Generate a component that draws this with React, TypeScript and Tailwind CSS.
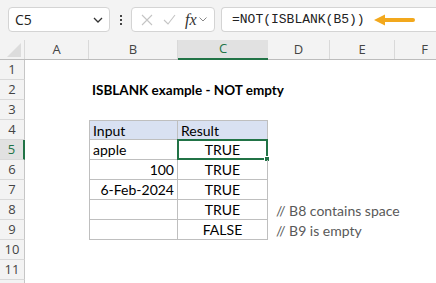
import React from "react";

const cols = [
  { key: "A", w: 64 },
  { key: "B", w: 89 },
  { key: "C", w: 90 },
  { key: "D", w: 62 },
  { key: "E", w: 65 },
  { key: "F", w: 60 },
];

function Row({ n, children, selected }: { n?: number; children?: React.ReactNode; selected?: boolean }) {
  return (
    <div className="flex h-[20px]">
      <div
        className={
          "w-[25px] shrink-0 flex items-center justify-center text-[13px] border-b border-[#d9d9d9] " +
          (selected
            ? "bg-[#e1e1e1] text-[#217346] border-r-2 border-r-[#217346]"
            : "bg-[#f3f3f3] text-[#444] border-r border-r-[#c6c6c6]")
        }
        style={{ fontFamily: "'Open Sans', sans-serif" }}
      >
        {n}
      </div>
      <div className="flex flex-1 min-w-0">{children}</div>
    </div>
  );
}

export default function App() {
  const cellFont = { fontFamily: "Lato, 'Liberation Sans', sans-serif" };
  return (
    <div className="w-[436px] h-[283px] overflow-hidden bg-white flex flex-col">
      {/* toolbar */}
      <div className="h-[40px] bg-[#f3f3f3] flex items-start pt-[7px] pl-[8px] gap-0 shrink-0">
        <div
          className="w-[102px] h-[25px] bg-white border border-[#d4d4d4] rounded-[4px] flex items-center justify-between pl-[6px] pr-[6px]"
          style={{ fontFamily: "'Open Sans', sans-serif" }}
        >
          <span className="text-[14px] text-[#222]">C5</span>
          <svg width="10" height="6" viewBox="0 0 10 6">
            <path d="M1 1 L5 5 L9 1" fill="none" stroke="#333" strokeWidth="1.3" />
          </svg>
        </div>
        <div className="w-[21px] h-[25px] flex flex-col items-center justify-center gap-[2px]">
          <div className="w-[2px] h-[2px] bg-[#444]" />
          <div className="w-[2px] h-[2px] bg-[#444]" />
          <div className="w-[2px] h-[2px] bg-[#444]" />
        </div>
        <div className="w-[84px] h-[25px] bg-white border border-[#d4d4d4] rounded-[4px] flex items-center pl-[9px] gap-[10px]">
          <svg width="12" height="12" viewBox="0 0 12 12">
            <path d="M1 1 L11 11 M11 1 L1 11" stroke="#c4c4c4" strokeWidth="1.1" fill="none" />
          </svg>
          <svg width="13" height="11" viewBox="0 0 13 11">
            <path d="M1 6 L5 10 L12 1" stroke="#c4c4c4" strokeWidth="1.1" fill="none" />
          </svg>
          <div className="flex items-center gap-[2px] -ml-[1px]">
            <span
              className="text-[16px] italic text-[#333] leading-none"
              style={{ fontFamily: "'Liberation Serif', serif" }}
            >
              fx
            </span>
            <svg width="8" height="5" viewBox="0 0 8 5">
              <path d="M0.5 0.5 L4 4 L7.5 0.5" fill="none" stroke="#888" strokeWidth="1" />
            </svg>
          </div>
        </div>
        <div className="ml-[6px] flex-1 h-[25px] bg-white border border-r-0 border-[#d4d4d4] rounded-l-[4px] flex items-center pl-[10px]">
          <span
            className="text-[13px] text-[#222]"
            style={{ fontFamily: "'Liberation Mono', monospace" }}
          >
            =NOT(ISBLANK(B5))
          </span>
          <svg width="44" height="12" viewBox="0 0 44 12" className="ml-[8px]">
            <path d="M12 6 L40 6" stroke="#f2a81d" strokeWidth="4" strokeLinecap="round" />
            <path d="M1 6 L12 0.5 L12 11.5 Z" fill="#f2a81d" />
          </svg>
        </div>
      </div>

      {/* column headers */}
      <div className="flex h-[20px] shrink-0 bg-[#f3f3f3] border-b border-[#bcbcbc]">
        <div className="w-[25px] shrink-0 relative border-r border-[#d9d9d9]">
          <svg width="14" height="14" viewBox="0 0 14 14" className="absolute right-[3px] bottom-[2px]">
            <path d="M14 0 L14 14 L0 14 Z" fill="#dcdcdc" />
          </svg>
        </div>
        {cols.map((c) => (
          <div
            key={c.key}
            className={
              "shrink-0 flex items-center justify-center text-[13px] " +
              (c.key === "C"
                ? "bg-[#e1e1e1] text-[#217346] border-b-2 border-[#217346] -mb-[1px]"
                : "text-[#444] border-r border-[#d9d9d9]")
            }
            style={{ width: c.w, fontFamily: "'Open Sans', sans-serif" }}
          >
            {c.key}
          </div>
        ))}
      </div>

      {/* rows */}
      <div className="flex flex-col text-[14px] text-black" style={cellFont}>
        <Row n={1} />
        <Row n={2}>
          <div className="w-[64px] shrink-0" />
          <div className="pl-[3px] text-[13.5px] font-bold whitespace-nowrap flex items-center">ISBLANK example - NOT empty</div>
        </Row>
        <Row n={3} />
        <Row n={4}>
          <div className="w-[64px] shrink-0" />
          <div className="w-[89px] shrink-0 bg-[#d9e1f2] border border-[#bfbfbf] flex items-center pl-[3px]">Input</div>
          <div className="w-[90px] shrink-0 bg-[#d9e1f2] border border-l-0 border-[#bfbfbf] flex items-center pl-[3px]">Result</div>
        </Row>
        {[
          { n: 5, b: "apple", ba: "left", c: "TRUE" },
          { n: 6, b: "100", ba: "right", c: "TRUE" },
          { n: 7, b: "6-Feb-2024", ba: "right", c: "TRUE" },
          { n: 8, b: "", ba: "left", c: "TRUE", note: "// B8 contains space" },
          { n: 9, b: "", ba: "left", c: "FALSE", note: "// B9 is empty" },
        ].map((r) => (
          <Row key={r.n} n={r.n} selected={r.n === 5}>
            <div className="w-[64px] shrink-0" />
            <div
              className={
                "w-[89px] shrink-0 border-l border-r border-b border-[#bfbfbf] flex items-center px-[3px] " +
                (r.ba === "right" ? "justify-end" : "justify-start")
              }
            >
              {r.b}
            </div>
            <div className="w-[90px] shrink-0 border-r border-b border-[#bfbfbf] flex items-center justify-center relative">
              {r.c}
              {r.n === 5 && (
                <div className="absolute -left-[1px] -top-[1px] w-[91px] h-[21px] border-2 border-[#217346]">
                  <div className="absolute -right-[4px] -bottom-[4px] w-[6px] h-[6px] bg-[#217346] border border-white" />
                </div>
              )}
            </div>
            {r.note && (
              <div className="pl-[8px] whitespace-nowrap flex items-center text-[#595959]">{r.note}</div>
            )}
          </Row>
        ))}
        <Row n={10} />
        <Row n={11} />
        <Row />
      </div>
    </div>
  );
}
